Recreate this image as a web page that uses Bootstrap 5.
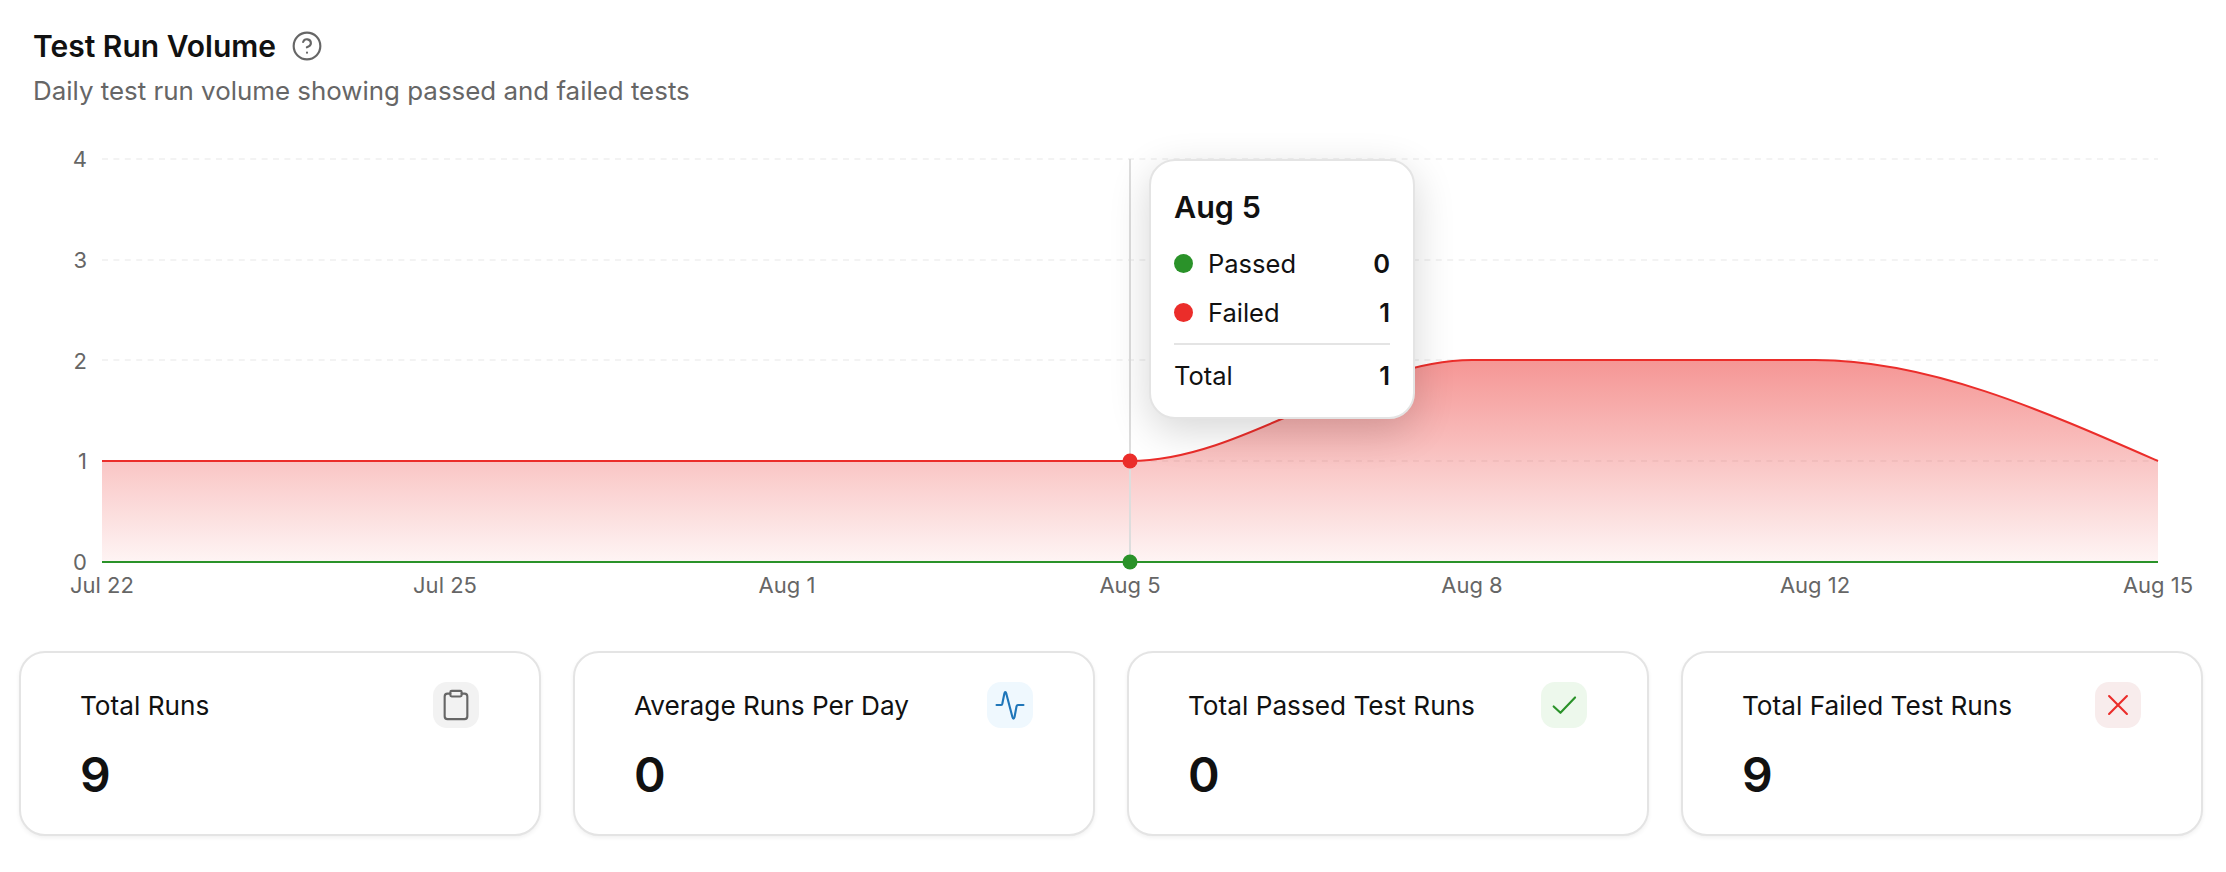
<!DOCTYPE html>
<html lang="en">
<head>
  <meta charset="UTF-8" />
  <title>Test Run Volume</title>
  <link href="https://cdn.jsdelivr.net/npm/bootstrap@5.3.3/dist/css/bootstrap.min.css" rel="stylesheet">
  <style>
    body {
      background: #fff;
      font-family: Inter, "Liberation Sans", sans-serif;
      color: #111;
      width: 2226px;
      height: 872px;
      overflow: hidden;
    }
    .head-block {
      height: 130px;
      padding: 27px 33px 0;
    }
    .head-title {
      font-size: 30px;
      line-height: 38px;
      font-weight: 600;
      margin: 0;
    }
    .help-ico {
      margin-left: 7px;
    }
    .head-sub {
      font-size: 25.9px;
      line-height: 36px;
      color: #666;
      margin: 8px 0 0;
    }
    .chart-wrap {
      height: 500px;
    }
    .chart-wrap svg {
      display: block;
    }
    .axis-txt {
      font-family: Inter, sans-serif;
      font-size: 22px;
      fill: #666;
    }
    .chart-tip {
      top: 29px;
      left: 1149px;
      width: 266px;
      height: 260px;
      padding: 26px 23px;
      background: #fff;
      border: 2px solid #e4e4e4;
      border-radius: 26px;
      box-shadow: 0 12px 40px rgba(0, 0, 0, .16);
    }
    .tip-date {
      font-size: 30.5px;
      line-height: 40px;
      font-weight: 600;
      margin-bottom: 19px;
    }
    .tip-row {
      font-size: 25.5px;
      line-height: 36px;
      height: 49px;
    }
    .tip-row b {
      font-weight: 600;
    }
    .tip-row.tip-total {
      height: 36px;
    }
    .tip-dot {
      width: 19px;
      height: 19px;
      border-radius: 50%;
      margin-top: 8px;
      margin-right: 15px;
    }
    .dot-pass { background: #2a9229; }
    .dot-fail { background: #eb2d2a; }
    .tip-line {
      height: 2px;
      background: #e4e4e4;
      margin: -1px 0 13px;
    }
    .stats-row {
      gap: 32px;
      padding: 21px 23px 0 19px;
    }
    .stat-card {
      flex: 1 1 0;
      height: 185px;
      padding: 29px 60px 29px 59px;
      border: 2px solid #e4e4e4;
      border-radius: 26px;
      box-shadow: 0 2px 4px rgba(0, 0, 0, .06);
    }
    .stat-label {
      font-size: 26.2px;
      line-height: 36px;
      margin-top: 6px;
    }
    .stat-value {
      font-size: 48px;
      line-height: 58px;
      font-weight: 600;
      margin-top: 22px;
    }
    .stat-ico {
      width: 46px;
      height: 46px;
      border-radius: 14px;
    }
    .ico-grey { background: #f2f2f2; color: #666; }
    .ico-blue { background: #eff8fe; color: #1f76b9; }
    .ico-green { background: #edf8ec; color: #2a9229; }
    .ico-red { background: #f8ecec; color: #eb2d2a; }
  </style>
</head>
<body>
  <div class="head-block">
    <div class="d-flex align-items-center gap-2">
      <h1 class="head-title">Test Run Volume</h1>
      <svg class="help-ico" width="32" height="32" viewBox="0 0 24 24" fill="none" stroke="#666" stroke-width="1.6" stroke-linecap="round" stroke-linejoin="round">
        <circle cx="12" cy="12" r="10"/>
        <path d="M9.09 9a3 3 0 0 1 5.83 1c0 2-3 3-3 3"/>
        <path d="M12 17h.01"/>
      </svg>
    </div>
    <p class="head-sub">Daily test run volume showing passed and failed tests</p>
  </div>

  <div class="chart-wrap position-relative">
    <svg width="2226" height="500" viewBox="0 130 2226 500">
      <defs>
        <linearGradient id="failFill" x1="0" y1="0" x2="0" y2="1">
          <stop offset="0" stop-color="#eb2d2a" stop-opacity=".5"/>
          <stop offset="1" stop-color="#eb2d2a" stop-opacity=".05"/>
        </linearGradient>
      </defs>
      <g stroke="#f0f0f0" stroke-width="1.5" stroke-dasharray="6 5.4">
        <line x1="102" y1="159" x2="2158" y2="159"/>
        <line x1="102" y1="260" x2="2158" y2="260"/>
        <line x1="102" y1="360" x2="2158" y2="360"/>
        <line x1="102" y1="461" x2="2158" y2="461"/>
      </g>
      <g text-anchor="end">
        <text class="axis-txt" x="87" y="167">4</text>
        <text class="axis-txt" x="87" y="268">3</text>
        <text class="axis-txt" x="87" y="369">2</text>
        <text class="axis-txt" x="87" y="469">1</text>
        <text class="axis-txt" x="87" y="570">0</text>
      </g>
      <path d="M102 461H1130C1244 461 1358 360 1472 360H1815C1929 360 2044 411 2158 461V562H102Z" fill="url(#failFill)"/>
      <path d="M102 461H1130C1244 461 1358 360 1472 360H1815C1929 360 2044 411 2158 461" fill="none" stroke="#eb2d2a" stroke-width="2"/>
      <line x1="102" y1="562" x2="2158" y2="562" stroke="#2a9229" stroke-width="2"/>
      <line x1="1130" y1="159" x2="1130" y2="562" stroke="#ddd" stroke-width="2"/>
      <circle cx="1130" cy="461" r="7.5" fill="#eb2d2a"/>
      <circle cx="1130" cy="562" r="7.5" fill="#2a9229"/>
      <g text-anchor="middle">
        <text class="axis-txt" x="102" y="593">Jul 22</text>
        <text class="axis-txt" x="445" y="593">Jul 25</text>
        <text class="axis-txt" x="787" y="593">Aug 1</text>
        <text class="axis-txt" x="1130" y="593">Aug 5</text>
        <text class="axis-txt" x="1472" y="593">Aug 8</text>
        <text class="axis-txt" x="1815" y="593">Aug 12</text>
        <text class="axis-txt" x="2158" y="593">Aug 15</text>
      </g>
    </svg>

    <div class="chart-tip position-absolute">
      <div class="tip-date">Aug 5</div>
      <div class="tip-row d-flex align-items-start">
        <span class="tip-dot dot-pass"></span>
        <span class="flex-grow-1">Passed</span><b>0</b>
      </div>
      <div class="tip-row d-flex align-items-start">
        <span class="tip-dot dot-fail"></span>
        <span class="flex-grow-1">Failed</span><b>1</b>
      </div>
      <div class="tip-line"></div>
      <div class="tip-row tip-total d-flex">
        <span class="flex-grow-1">Total</span><b>1</b>
      </div>
    </div>
  </div>

  <div class="stats-row d-flex">
    <div class="card stat-card flex-row justify-content-between align-items-start">
      <div>
        <div class="stat-label">Total Runs</div>
        <div class="stat-value">9</div>
      </div>
      <div class="stat-ico ico-grey d-flex align-items-center justify-content-center">
        <svg width="34" height="34" viewBox="0 0 24 24" fill="none" stroke="currentColor" stroke-width="1.5" stroke-linecap="round" stroke-linejoin="round">
          <rect x="8" y="2" width="8" height="4" rx="1"/>
          <path d="M16 4h2a2 2 0 0 1 2 2v14a2 2 0 0 1-2 2H6a2 2 0 0 1-2-2V6a2 2 0 0 1 2-2h2"/>
        </svg>
      </div>
    </div>
    <div class="card stat-card flex-row justify-content-between align-items-start">
      <div>
        <div class="stat-label">Average Runs Per Day</div>
        <div class="stat-value">0</div>
      </div>
      <div class="stat-ico ico-blue d-flex align-items-center justify-content-center">
        <svg width="34" height="34" viewBox="0 0 24 24" fill="none" stroke="currentColor" stroke-width="1.5" stroke-linecap="round" stroke-linejoin="round">
          <path d="M2.5 12H5.5C6.1 12 6.4 11.7 6.6 11L8 4C8.3 2.6 9 2.6 9.4 4L13.7 20.5C14.1 22 14.8 22 15.2 20.5L16.6 13C16.8 12.3 17.1 12 17.7 12H21.5"/>
        </svg>
      </div>
    </div>
    <div class="card stat-card flex-row justify-content-between align-items-start">
      <div>
        <div class="stat-label">Total Passed Test Runs</div>
        <div class="stat-value">0</div>
      </div>
      <div class="stat-ico ico-green d-flex align-items-center justify-content-center">
        <svg width="34" height="34" viewBox="0 0 24 24" fill="none" stroke="currentColor" stroke-width="1.5" stroke-linecap="round" stroke-linejoin="round">
          <path d="M4.7 13 9.5 17.5 19.8 6.7"/>
        </svg>
      </div>
    </div>
    <div class="card stat-card flex-row justify-content-between align-items-start">
      <div>
        <div class="stat-label">Total Failed Test Runs</div>
        <div class="stat-value">9</div>
      </div>
      <div class="stat-ico ico-red d-flex align-items-center justify-content-center">
        <svg width="34" height="34" viewBox="0 0 24 24" fill="none" stroke="currentColor" stroke-width="1.5" stroke-linecap="round" stroke-linejoin="round">
          <path d="M5.7 5.7 18.3 18.3M18.3 5.7 5.7 18.3"/>
        </svg>
      </div>
    </div>
  </div>

  <script src="https://cdn.jsdelivr.net/npm/bootstrap@5.3.3/dist/js/bootstrap.bundle.min.js"></script>
</body>
</html>
